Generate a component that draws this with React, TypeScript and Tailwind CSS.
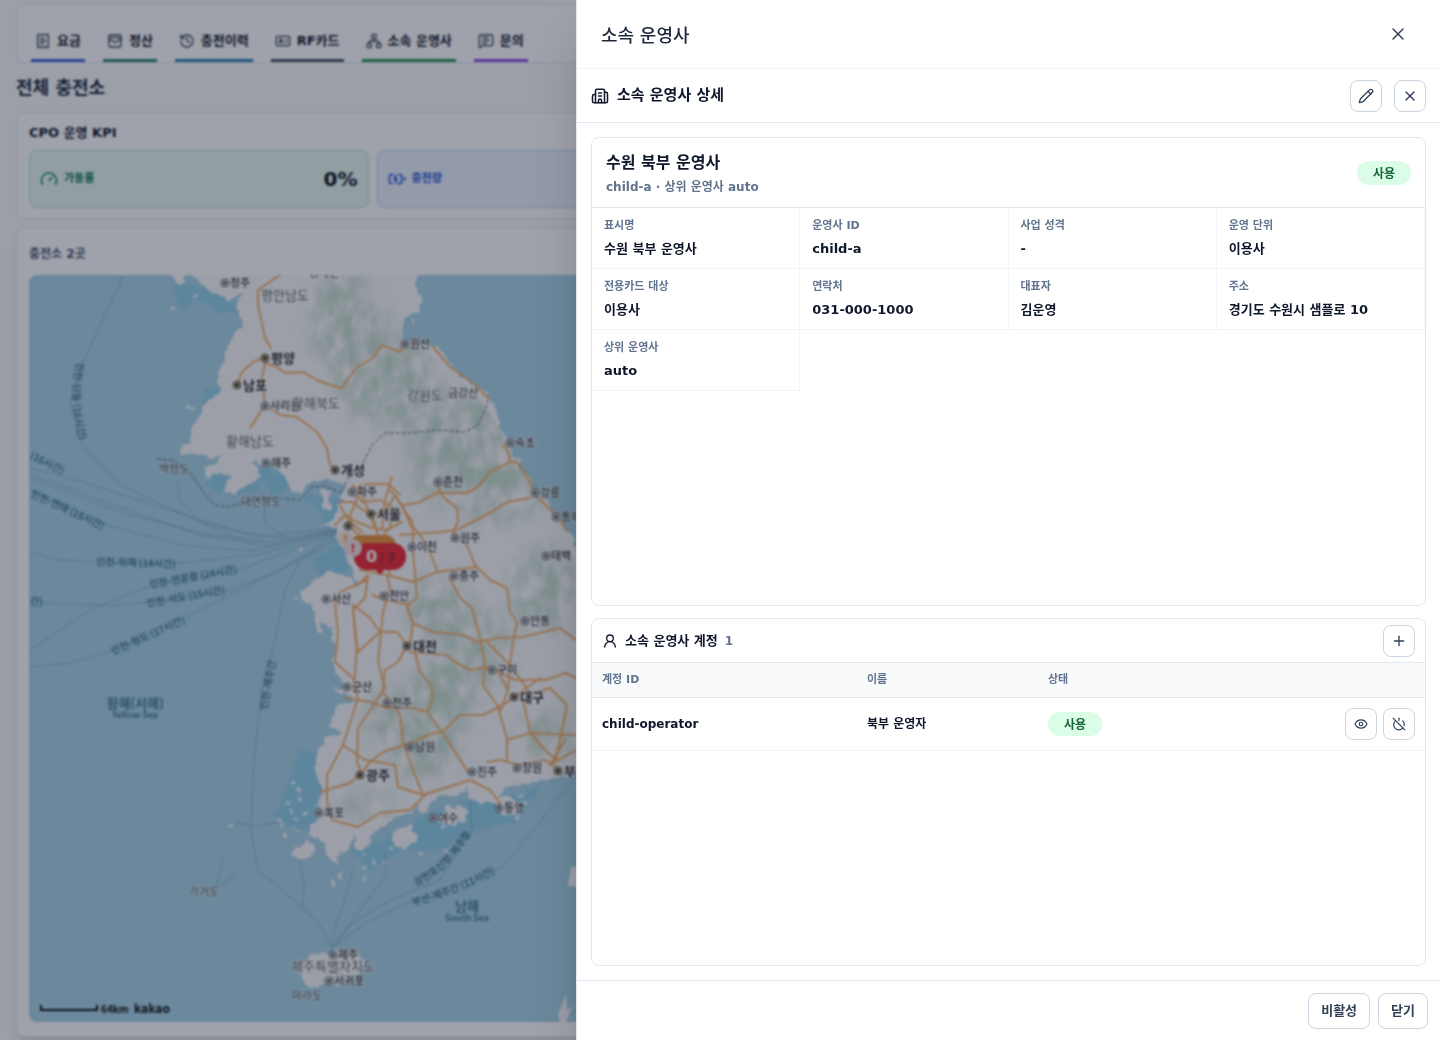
import {
  BatteryCharging,
  Building2,
  Eye,
  Gauge,
  History,
  IdCard,
  MessageSquareText,
  Network,
  Pencil,
  Plus,
  PowerOff,
  ReceiptText,
  UserRound,
  WalletCards,
  X,
} from "lucide-react"

const tabs = [
  { label: "요금", icon: ReceiptText, line: "border-[#3d63dd]" },
  { label: "정산", icon: WalletCards, line: "border-[#2c8577]" },
  { label: "충전이력", icon: History, line: "border-[#2583b0]" },
  { label: "RF카드", icon: IdCard, line: "border-[#475569]" },
  { label: "소속 운영사", icon: Network, line: "border-[#2c9454]" },
  { label: "문의", icon: MessageSquareText, line: "border-[#8b4ee8]" },
]

const details = [
  ["표시명", "수원 북부 운영사"],
  ["운영사 ID", "child-a"],
  ["사업 성격", "-"],
  ["운영 단위", "이용사"],
  ["전용카드 대상", "이용사"],
  ["연락처", "031-000-1000"],
  ["대표자", "김운영"],
  ["주소", "경기도 수원시 샘플로 10"],
  ["상위 운영사", "auto"],
]

const roads = [
  "M280 275L258 290V305L263 328L265 338L271 348",
  "M237 385L242 372L253 362L265 357",
  "M265 363L277 367L285 373L303 372L317 380L330 385L342 388L347 380L357 367L373 358L382 345L400 352L407 343M433 347L450 367L473 383L488 398",
  "M265 362L262 378L265 405L250 428M265 405L280 415L297 417L317 432L327 448L330 465L335 470",
  "M403 505L417 503L437 493L467 493L478 487L490 472L510 462L517 462L530 482L535 495L553 512L567 530M503 445L508 452L510 462",
  "M530 498L507 502L490 513L457 530L440 532L400 535",
  "M437 485L443 497L457 508L458 522L453 532L467 545L475 565L490 580L507 588L510 612L517 622L512 648L510 665L508 690",
  "M390 490L402 505L410 522L427 545L437 570",
  "M360 570L387 575L413 582L437 572L477 567",
  "M403 508L413 530V552L417 598L407 605L413 623L410 645",
  "M407 608L413 623L433 632L463 635L477 642L497 638L523 637L560 628L576 640",
  "M450 578L460 598L472 608L480 638L485 662L483 685L497 705L507 738V762",
  "M410 652L447 655L455 662L470 670L490 667L515 680L545 680L566 673L576 678",
  "M367 580L340 592L335 605L338 632L335 662L353 678L358 698L343 745L327 775V800L332 820L358 827L380 813L410 810L423 797L427 793",
  "M387 575L390 588L383 612L378 662L385 688L358 728L357 762L363 776",
  "M353 605L370 618L380 632L397 632L407 645L398 662L385 670L383 692L400 715L403 742L413 770L423 795L470 780L490 790L500 803",
  "M372 595L385 600L410 605M353 605L355 635L358 652L380 632",
  "M358 585L368 575L365 598L353 610L357 645L354 690",
  "M415 652L420 672L432 687V702L427 712",
  "M345 698L370 702L387 708L413 708L427 712L442 732L433 733L413 742L383 752L370 762L361 774",
  "M442 732L460 715L483 715L503 705L517 695L540 678M443 733L457 755L470 775",
  "M507 740L530 733L576 735M487 762L500 760L520 765L545 760L560 770",
  "M523 700L530 732L543 748L556 760L567 705L550 688L528 695M565 740L550 765L576 750",
  "M487 642L510 665L528 690M497 670L508 690L500 712",
  "M395 765L398 787L423 795M320 792L350 783L361 774M343 745L365 760L395 765",
]

// dense ring roads around the capital
const capitalRoads = [
  "M340 502L352 502L363 510L372 514L385 512L395 495L404 510L413 522",
  "M335 525L345 515L357 522L372 528L387 530L402 522",
  "M353 485L357 500L350 515L353 530L365 540L380 540L390 527L392 507L380 500L362 502Z",
  "M340 505L348 520L362 532M365 484L388 484L400 495M392 477L385 500L382 530",
  "M372 514L378 535L385 558L390 575M345 540L360 550M360 485L364 500L375 528",
]

const ferries = [
  "M123 277L83 362L70 405L83 447L120 485L200 522L260 537L337 528",
  "M30 468L70 478L160 507L240 532L300 540L337 530",
  "M30 474L100 500L200 535L270 546L337 530",
  "M30 478L120 512L200 533L270 542L337 529",
  "M30 490L107 525L180 545L250 551L337 531",
  "M30 552L60 560L110 563L180 563L260 554L337 532",
  "M30 602L110 606L150 602L230 590L280 570L337 532",
  "M30 650L90 610L150 586L240 570L290 550L337 533",
  "M30 667L70 663L110 652L190 615L260 580L300 560L337 535",
  "M178 482L180 500L200 522L250 543M262 492L266 525L290 540",
  "M337 540L300 560L285 590L275 640L262 690L254 760L251 830L258 870L300 905L320 925L332 948",
  "M235 823L255 826L278 822M220 855L223 862L215 888L235 876",
  "M300 862L304 885L302 910M353 868L345 900L334 930L332 948M385 852L386 875L360 910L332 948",
  "M470 800L472 830L440 880L390 900L350 925L332 948M576 776L530 835L500 868L410 902L370 920L332 948",
]

const cities = [
  ["정주", 225, 283],
  ["원산", 405, 344],
  ["사리원", 265, 406],
  ["해주", 266, 463],
  ["속초", 510, 443],
  ["파주", 352, 492],
  ["춘천", 438, 482],
  ["강릉", 535, 493],
  ["동해", 556, 517],
  ["이천", 412, 547],
  ["원주", 455, 538],
  ["태백", 546, 556],
  ["서산", 326, 599],
  ["천안", 384, 596],
  ["충주", 454, 576],
  ["안동", 525, 621],
  ["구미", 492, 670],
  ["군산", 347, 687],
  ["전주", 387, 703],
  ["남원", 410, 747],
  ["진주", 472, 772],
  ["창원", 517, 768],
  ["목포", 319, 813],
  ["여수", 433, 818],
  ["통영", 499, 808],
  ["제주", 333, 955],
  ["서귀포", 329, 981],
] as const

const bigCities = [
  ["평양", 265, 358],
  ["남포", 237, 385],
  ["개성", 335, 470],
  ["서울", 371, 514],
  ["대전", 407, 646],
  ["대구", 514, 697],
  ["광주", 360, 775],
  ["부산", 558, 771],
] as const

const provinces = [
  ["평안남도", 285, 295],
  ["황해북도", 316, 403],
  ["황해남도", 250, 441],
  ["강원도", 425, 395],
  ["제주특별자치도", 333, 966],
] as const

const greens = [
  [345, 320, 36, 50],
  [385, 375, 50, 50],
  [460, 430, 56, 40],
  [500, 490, 50, 34],
  [440, 480, 30, 30],
  [545, 590, 34, 44],
  [440, 610, 34, 34],
  [440, 700, 34, 44],
  [425, 752, 34, 28],
  [480, 650, 34, 36],
  [545, 735, 26, 24],
  [365, 805, 30, 14],
  [390, 720, 24, 34],
  [340, 977, 22, 10],
]

const islets = [
  [196, 296], [173, 308], [190, 407], [302, 549], [297, 598], [293, 782], [288, 804], [293, 810],
  [278, 819], [281, 825], [294, 820], [232, 826], [297, 830], [286, 835], [333, 883], [363, 880],
  [365, 868], [364, 855], [372, 862], [446, 850], [419, 853], [518, 818], [525, 803], [412, 322],
  [300, 800], [305, 815], [299, 790], [391, 848], [442, 828], [520, 795], [384, 862], [340, 876],
]

function KoreaMap() {
  return (
    <svg viewBox="29 275 1382 747" preserveAspectRatio="xMinYMin slice" className="block h-full w-full" aria-hidden="true">
      <defs>
        <filter id="coast" x="-5%" y="-5%" width="110%" height="110%">
          <feTurbulence type="fractalNoise" baseFrequency="0.12" numOctaves="3" seed="4" result="noise" />
          <feDisplacementMap in="SourceGraphic" in2="noise" scale="9" xChannelSelector="R" yChannelSelector="G" />
        </filter>
        {/* mottled hills: noise alpha cut out of the blurred green areas */}
        <filter id="terrain" x="-10%" y="-10%" width="120%" height="120%">
          <feGaussianBlur in="SourceGraphic" stdDeviation="11" result="soft" />
          <feTurbulence type="fractalNoise" baseFrequency="0.07 0.045" numOctaves="4" seed="9" />
          <feColorMatrix values="0 0 0 0 0  0 0 0 0 0  0 0 0 0 0  2.4 0 0 0 -0.6" result="mottle" />
          <feComposite in="soft" in2="mottle" operator="in" />
        </filter>
        <path id="route-shandong" d="M77 362Q66 404 84 454" />
        <path id="route-samcheonpo" d="M416 886Q455 868 478 820" />
        <path id="route-busan" d="M413 906Q462 893 506 867" />
        <clipPath id="east">
          <path d="M230 275H410L402 340L440 360L480 400L560 520L620 560V790L300 830L345 560L340 480L230 440Z M300 965H365V985H300Z" />
        </clipPath>
      </defs>
      <rect x="29" y="275" width="1382" height="747" fill="#a8d4e8" />

      {/* shallow water */}
      <g fill="#92d0ea" filter="url(#coast)">
        <path d="M172 280L195 285L230 300L240 310L225 315L200 300L180 310Z" />
        <path d="M205 390L222 385L218 400L200 405ZM220 460L205 485L215 492L255 495L262 478L240 470ZM250 460L290 480L275 500L262 480Z" />
        <path d="M300 495L345 500L340 530L350 570L320 575L312 560L335 545L320 510Z" />
        <path d="M300 750L320 755L318 800L310 830L285 825L275 815L290 780ZM350 850L375 845L400 830L425 815L470 800L520 795L540 785L520 820L480 830L440 850L400 850L370 870Z" />
      </g>

      <g fill="#fbfbfc" filter="url(#coast)">
        <path d="M167 270L177 282L184 284L188 274L207 288L220 298L233 298L243 293L236 305L240 317L244 322L233 335L228 348L220 368L217 383L223 387L220 395L207 402L202 412L193 427L190 442L177 452L187 453L203 457L221 457L215 465L204 468L207 478L220 472L230 478L223 492L233 495L247 485L260 478L257 468L252 462L273 465L287 478L293 492L300 493L310 482L323 480L345 484L342 498L338 512L330 523L320 526L337 528L337 540L345 552L353 568L358 586L350 577L330 570L320 577L312 585L300 592L302 602L312 603L317 615L317 628L322 638V622L333 628L332 638L335 648L333 662L340 678L347 688L333 689L357 700L337 708L328 725L343 732L327 737L317 752L315 770L322 793L317 803L320 817L310 823V837L323 842L330 860L337 864L340 853L350 847L353 833L357 850L370 847L372 833L383 827L390 820L407 813L418 805L423 815L429 803L437 798L453 795L467 790L470 800L487 802L497 803L503 790L517 785L533 782L550 780L570 776L620 745V560L578 548L567 530L555 512L530 480L512 452L503 432L490 402L485 390L473 385L457 372L443 353L433 345L405 340V317L417 313L421 295L415 285L418 270Z" />
        <path d="M322 489H330L332 509H323ZM293 852L305 840L316 844L312 856L298 860ZM390 838L398 828L412 825L418 840L402 850ZM438 818L450 806L466 808L465 820L450 826ZM495 800L508 796L522 806L514 816L500 812ZM316 610L323 634L319 636L314 616Z" />
        <path d="M298 965L312 955L335 951L358 953L367 962L360 974L340 984L318 987L305 986Z" />
        {islets.map(([x, y]) => (
          <circle key={`${x}-${y}`} cx={x} cy={y} r="2" />
        ))}
      </g>
      <path d="M571 867L590 866V888L568 886ZM566 995L567 1010L572 1007L566 1022H560L558 1014Z" fill="#fbfbfc" />

      <g clipPath="url(#east)">
        <g fill="#a9cdb6" opacity="0.6" filter="url(#terrain)">
          {greens.map(([x, y, rx, ry]) => (
            <ellipse key={`${x}-${y}`} cx={x} cy={y} rx={rx} ry={ry} />
          ))}
        </g>
      </g>

      <g fill="none" stroke="#f3b06c" strokeWidth="2" strokeLinejoin="round" strokeLinecap="round">
        {[...roads, ...capitalRoads].map((d) => (
          <path key={d} d={d} />
        ))}
      </g>
      <path d="M157 459L175 461L190 472L205 495L216 505L230 507L262 497L300 500L312 487L325 486L342 493L347 480L362 465L372 445L385 433L410 433L437 430L465 432L478 425L485 410L488 400" fill="none" stroke="#66666e" strokeWidth="1" strokeDasharray="4 2" />
      <g fill="none" stroke="#7ba6bf" strokeWidth="1" strokeDasharray="2 1" strokeLinejoin="round">
        {ferries.map((d) => (
          <path key={d} d={d} />
        ))}
      </g>

      <g fill="#3a6f88" fontSize="10" className="font-['Noto_Sans_CJK_KR',sans-serif] font-medium">
        <text><textPath href="#route-shandong">인천-단동 (16시간)</textPath></text>
        <text><textPath href="#route-samcheonpo">삼천포신항-제주항</textPath></text>
        <text><textPath href="#route-busan">부산-제주간 (11시간)</textPath></text>
        <text transform="translate(29 458) rotate(26)">(16시간)</text>
        <text transform="translate(30 496) rotate(25)">인천-연태 (16시간)</text>
        <text transform="translate(96 565) rotate(2)">인천-위해 (14시간)</text>
        <text transform="translate(150 588) rotate(-10)">인천-연운항 (24시간)</text>
        <text transform="translate(147 607) rotate(-10)">인천-석도 (15시간)</text>
        <text transform="translate(113 655) rotate(-24)">인천-청도 (17시간)</text>
        <text x="30" y="605">간)</text>
        <text transform="translate(267 710) rotate(-80)">인천-제주간</text>
        <text x="135" y="708" fontSize="13" textAnchor="middle">황해(서해)</text>
        <text x="135" y="718" fontSize="9" textAnchor="middle">Yellow Sea</text>
        <text x="467" y="911" fontSize="13" textAnchor="middle">남해</text>
        <text x="467" y="921" fontSize="9" textAnchor="middle">South Sea</text>
      </g>

      <g opacity="0.9" stroke="#fff" strokeOpacity="0.8" strokeWidth="2" paintOrder="stroke" className="font-['Noto_Sans_CJK_KR',sans-serif]">
        <g fill="#4c5056" fontSize="13">
          {provinces.map(([name, x, y]) => (
            <text key={name} x={x} y={y + 5} textAnchor="middle">{name}</text>
          ))}
        </g>
        <g fill="#44484e" strokeOpacity="0.5" fontSize="11">
          <text x="159" y="473">백령도</text>
          <text x="241" y="506">대연평도</text>
          <text x="189" y="896">가거도</text>
          <text x="292" y="1000">마라도</text>
          <text x="448" y="397" fill="#222">금강산</text>
          <text x="309" y="277" fill="#222">강계안</text>
        </g>
        <g fill="#222428" fontSize="11" className="font-medium">
          {cities.map(([name, x, y]) => (
            <text key={name} x={x + 5} y={y + 4}>{name}</text>
          ))}
        </g>
        <g fill="#111" fontSize="13" className="font-bold">
          {bigCities.map(([name, x, y]) => (
            <text key={name} x={x + 6} y={y + 5}>{name}</text>
          ))}
        </g>
      </g>
      {cities.map(([name, x, y]) => (
        <g key={name}>
          <circle cx={x} cy={y} r="4" fill="#e4e5e8" stroke="#5b5f66" />
          <circle cx={x} cy={y} r="2" fill="#5b5f66" />
        </g>
      ))}
      {[...bigCities, ["인천", 348, 526] as const].map(([name, x, y]) => (
        <g key={name}>
          <circle cx={x} cy={y} r="4" fill="#cbbf95" stroke="#4d483c" />
          <circle cx={x} cy={y} r="2" fill="#2c2a22" />
        </g>
      ))}

      {/* station markers */}
      <g className="font-['DejaVu_Sans',sans-serif] font-bold">
        <rect x="350" y="535" width="46" height="20" rx="10" fill="#e8933a" />
        <circle cx="345" cy="539" r="8" fill="#f6e8dc" fillOpacity="0.85" />
        <text x="345" y="543" fontSize="11" textAnchor="middle" fill="#f0a35a">?</text>
        <path d="M375 569H385L380 575Z" fill="#ef2b36" />
        <rect x="354" y="543" width="52" height="27" rx="13" fill="#ef2b36" />
        <circle cx="353" cy="548" r="9" fill="#f4dfe2" />
        <text x="353" y="552" fontSize="11" textAnchor="middle" fill="#e11d2e">!</text>
        <text x="366" y="562" fontSize="16" fill="#fff">0</text>
        <text x="379" y="562" fontSize="12" fill="#8e2a36">/ 7</text>
      </g>

      <path d="M41 1005V1010H97V1005" fill="none" stroke="#111" strokeWidth="2" />
      <g fill="#111" className="font-['Noto_Sans_CJK_KR',sans-serif] font-bold">
        <text x="101" y="1013" fontSize="10">64km</text>
        <text x="134" y="1013" fontSize="12">kakao</text>
      </g>
    </svg>
  )
}

function Dashboard() {
  return (
    <div className="flex flex-col px-4 pt-1" aria-hidden="true">
      <nav className="flex h-[59px] items-end gap-[18px] rounded-lg border border-slate-200 bg-white px-[14px]">
        {tabs.map(({ label, icon: Icon, line }) => (
          <a key={label} href="#" className={`flex h-10 items-center gap-1.5 border-b-[3px] px-1 text-[13px] font-bold ${line}`}>
            <Icon size={16} className="text-slate-700" />
            {label}
          </a>
        ))}
      </nav>
      <h1 className="mt-[13px] text-lg leading-6 font-bold text-slate-800">전체 충전소</h1>

      <section className="mt-3 rounded-lg border border-slate-200 bg-white px-3 py-2.5">
        <h2 className="text-[13px] leading-5 font-bold">CPO 운영 KPI</h2>
        <div className="mt-[7px] grid grid-cols-4 gap-2">
          <div className="flex h-[58px] items-center gap-1.5 rounded-lg border border-[#b5e8cf] bg-[#e9faf2] px-2.5 text-[11px] font-bold text-[#047857]">
            <Gauge size={18} />
            가동률
            <strong className="ml-auto text-xl text-slate-900">0%</strong>
          </div>
          <div className="flex h-[58px] items-center gap-1.5 rounded-lg border border-[#bcd5fb] bg-[#ecf3ff] px-2.5 text-[11px] font-bold text-[#1d4ed8]">
            <BatteryCharging size={18} />
            충전량
          </div>
          <div className="h-[58px] rounded-lg border border-amber-200 bg-amber-50" />
          <div className="h-[58px] rounded-lg border border-slate-200 bg-slate-50" />
        </div>
      </section>

      <section className="mt-2 rounded-lg border border-slate-200 bg-white px-3 pt-4 pb-[14px] shadow-lg">
        <h2 className="text-xs leading-5 font-bold text-slate-600">충전소 2곳</h2>
        <div className="mt-[11px] h-[747px] overflow-hidden rounded-lg">
          <KoreaMap />
        </div>
      </section>
    </div>
  )
}

const iconButton = "flex size-8 items-center justify-center rounded-lg border border-slate-300 bg-white text-slate-700"

function StatusBadge() {
  return <span className="inline-flex h-6 items-center rounded-full bg-green-100 px-4 pt-0.5 text-xs font-bold text-[#166534]">사용</span>
}

function OperatorDrawer() {
  return (
    <aside role="dialog" aria-labelledby="drawer-title" className="fixed inset-y-0 right-0 flex w-3/5 flex-col border-l border-slate-200 bg-white shadow-2xl">
      <header className="flex h-[69px] shrink-0 items-center justify-between border-b border-slate-100 px-6">
        <h2 id="drawer-title" className="pt-1 text-lg font-medium text-slate-800">소속 운영사</h2>
        <button type="button" aria-label="닫기" className="flex size-9 items-center justify-center text-slate-700">
          <X size={20} strokeWidth={1.75} />
        </button>
      </header>

      <div className="flex h-[54px] shrink-0 items-center gap-2 border-b border-slate-200 px-[14px]">
        <Building2 size={18} />
        <h3 className="text-[15px] font-bold">소속 운영사 상세</h3>
        <div className="ml-auto flex gap-3">
          <button type="button" aria-label="수정" className={iconButton}><Pencil size={16} /></button>
          <button type="button" aria-label="상세 닫기" className={iconButton}><X size={16} /></button>
        </div>
      </div>

      <div className="grid min-h-0 flex-1 grid-rows-[1.35fr_1fr] gap-3 p-[14px]">
        <section className="min-h-0 overflow-hidden rounded-lg border border-slate-200">
          <div className="flex h-[70px] items-center justify-between border-b border-slate-200 px-[14px]">
            <div>
              <h4 className="pt-0.5 text-base leading-6 font-bold">수원 북부 운영사</h4>
              <p className="mt-0.5 text-xs leading-5 font-bold text-slate-500">child-a · 상위 운영사 auto</p>
            </div>
            <StatusBadge />
          </div>
          <dl className="grid grid-cols-4">
            {details.map(([label, value]) => (
              <div key={label} className="flex flex-col gap-[5px] border-r border-b border-slate-100 px-3 pt-2.5 pb-[9px] font-bold">
                <dt className="text-[11px] leading-4 text-slate-500">{label}</dt>
                <dd className="text-[13px] leading-5">{value}</dd>
              </div>
            ))}
          </dl>
        </section>

        <section className="min-h-0 overflow-hidden rounded-lg border border-slate-200">
          <div className="flex h-11 items-center gap-[7px] border-b border-slate-200 px-2.5">
            <UserRound size={16} />
            <h4 className="text-[13px] font-bold">소속 운영사 계정</h4>
            <span className="text-xs font-bold text-slate-500">1</span>
            <button type="button" aria-label="계정 추가" className={`ml-auto ${iconButton}`}><Plus size={16} /></button>
          </div>
          <table className="w-full table-fixed text-left text-xs font-bold">
            <thead className="bg-slate-50 text-[11px] text-slate-500">
              <tr className="h-[34px] border-b border-slate-200">
                <th className="w-[265px] px-2.5">계정 ID</th>
                <th className="w-[181px] px-2.5">이름</th>
                <th className="px-2.5">상태</th>
                <th className="px-2.5" aria-label="작업" />
              </tr>
            </thead>
            <tbody>
              <tr className="h-[53px] border-b border-slate-100">
                <td className="px-2.5">child-operator</td>
                <td className="px-2.5">북부 운영자</td>
                <td className="px-2.5"><StatusBadge /></td>
                <td className="px-2.5">
                  <div className="flex justify-end gap-1.5">
                    <button type="button" aria-label="보기" className={iconButton}><Eye size={14} /></button>
                    <button type="button" aria-label="비활성" className={iconButton}><PowerOff size={14} /></button>
                  </div>
                </td>
              </tr>
            </tbody>
          </table>
        </section>
      </div>

      <footer className="flex shrink-0 justify-end gap-2 border-t border-slate-200 px-3 pt-3 pb-[11px] text-[13px] font-semibold text-slate-700">
        <button type="button" className="h-9 rounded-lg border border-slate-300 px-3">비활성</button>
        <button type="button" className="h-9 rounded-lg border border-slate-300 px-3">닫기</button>
      </footer>
    </aside>
  )
}

export default function App() {
  return (
    <div className="h-screen overflow-hidden bg-slate-50 font-['DejaVu_Sans','Noto_Sans_CJK_KR',sans-serif] text-slate-900">
      <Dashboard />
      <div className="fixed inset-0 bg-slate-900/40 backdrop-blur-[1px]" />
      <OperatorDrawer />
    </div>
  )
}
